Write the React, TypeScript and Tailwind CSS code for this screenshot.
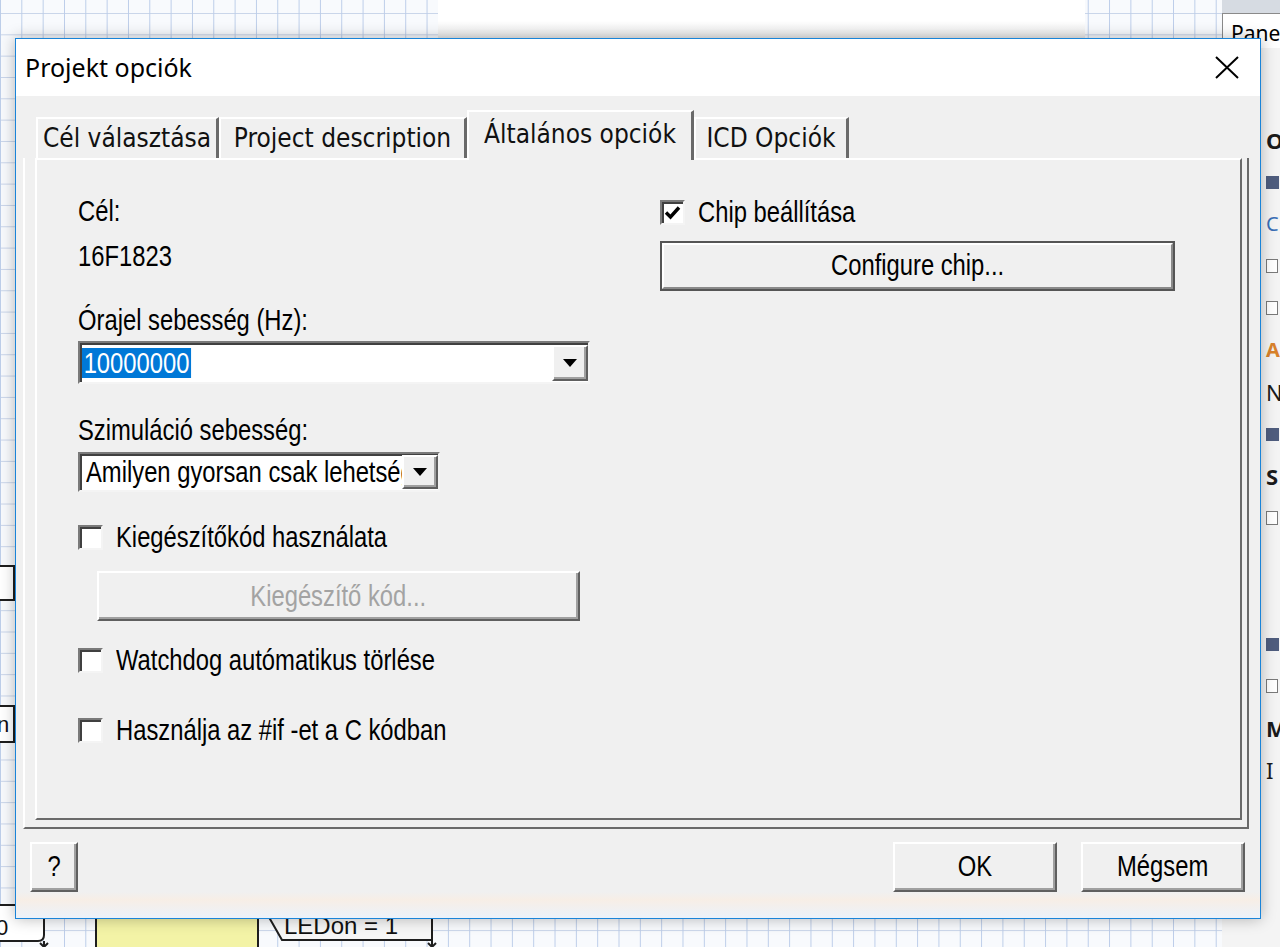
import React from "react";

const sans = "font-['Liberation_Sans',Arial,sans-serif]";
const tabFont = "font-['DejaVu_Sans_Condensed','DejaVu_Sans',sans-serif] font-stretch-condensed";

const raised =
  "border-2 border-t-white border-l-white border-r-[#5f5f5f] border-b-[#5f5f5f] bg-[#f0f0f0] shadow-[inset_-2px_-2px_0_#a0a0a0]";
const sunken =
  "border-2 border-t-[#7a7a7a] border-l-[#7a7a7a] border-r-[#f4f4f4] border-b-[#f4f4f4] shadow-[inset_2px_2px_0_#404040]";

// the dialog font is a tall, narrow sans; Liberation Sans squeezed to 82% gets close
const Narrow = ({ children, center = false }: { children: React.ReactNode; center?: boolean }) => (
  <span
    className={`inline-block whitespace-nowrap scale-x-[0.82] ${center ? "origin-center" : "origin-left"}`}
  >
    {children}
  </span>
);

const Arrow = () => (
  <svg width="14" height="8" viewBox="0 0 14 8">
    <path d="M0 0H14L7 8Z" fill="#000" />
  </svg>
);

const DropButton = ({ h }: { h: string }) => (
  <div className={`flex w-[36px] shrink-0 items-center justify-center ${h} ${raised}`}>
    <Arrow />
  </div>
);

const CheckBox = ({ checked = false, label }: { checked?: boolean; label: string }) => (
  <div className="flex h-[32px] items-center gap-[13px]">
    <span className={`flex h-[25px] w-[25px] shrink-0 items-center justify-center bg-white ${sunken}`}>
      {checked && (
        <svg width="17" height="15" viewBox="0 0 17 15">
          <path d="M2 7.5L6.5 12L15 2.5" fill="none" stroke="#000" strokeWidth="3.4" />
        </svg>
      )}
    </span>
    <span className="text-[29px] leading-[32px] text-black">
      <Narrow>{label}</Narrow>
    </span>
  </div>
);

const tabs = [
  { label: "Cél választása", w: "w-[183px]" },
  { label: "Project description", w: "w-[248px]" },
  { label: "Általános opciók", w: "w-[227px]", active: true },
  { label: "ICD Opciók", w: "w-[155px]" },
];

const sideRows = ["Op", "sq", "C", "box", "box", "A", "N", "sq", "S", "box", "", "", "sq", "box", "M", "I"];

const SideRow = ({ kind }: { kind: string }) => {
  if (kind === "sq") return <span className="h-[13px] w-[13px] bg-[#4f5d7e]" />;
  if (kind === "box") return <span className="h-[14px] w-[12px] border border-[#7a7a7a] bg-white" />;
  if (kind === "A") return <span className="text-[20px] font-bold text-[#d9822b]">A</span>;
  if (kind === "C") return <span className="text-[20px] text-[#3b6fb6]">C</span>;
  if (kind === "Op" || kind === "S" || kind === "M")
    return <span className="text-[22px] font-bold text-[#1b1b1b]">{kind}</span>;
  return <span className="text-[22px] text-[#1b1b1b]">{kind}</span>;
};

export default function App() {
  return (
    <div className="relative h-[947px] w-[1280px] overflow-hidden bg-[#f8fafd] bg-[image:linear-gradient(to_right,#bccde9_1px,transparent_1px),linear-gradient(to_bottom,#c9d5ea_1px,transparent_1px)] bg-[size:21.33px_21.33px] bg-[position:0_13px]">
      {/* window behind, top */}
      <div className="absolute left-[438px] top-0 h-[38px] w-[647px] bg-[linear-gradient(to_bottom,#ffffff,#ffffff_55%,#e9e9e9)]" />

      {/* side panel on the right */}
      <div className="absolute left-[1222px] top-0 flex h-[947px] w-[58px] flex-col bg-[#f4f4f4] font-['Noto_Sans',sans-serif]">
        <div className="h-[13px] bg-[#d6dbe2]" />
        <div className="h-[35px] border-l border-t border-[#8a8a8a] bg-white pl-[8px] text-[21px] leading-[38px] text-black">
          Panel
        </div>
        <div className="mt-[71px] flex flex-col pl-[44px]">
          {sideRows.map((r, i) => (
            <div key={i} className="flex h-[42px] items-center">
              <SideRow kind={r} />
            </div>
          ))}
        </div>
      </div>

      {/* flowchart pieces on the canvas */}
      <svg className="absolute left-0 top-0" width="1280" height="947" viewBox="0 0 1280 947">
        <rect x="-20" y="566" width="34" height="34" fill="#fff" stroke="#1e1e1e" strokeWidth="2" />
        <rect x="-30" y="706" width="44" height="36" fill="#fff" stroke="#1e1e1e" strokeWidth="2" />
        <text x="-3" y="732" fontFamily="Liberation Sans, sans-serif" fontSize="22" fill="#111">
          n :
        </text>
        <path d="M-10 905 H38 Q44 905 44 911 V935 Q44 941 38 941 H-10" fill="#fff" stroke="#1e1e1e" strokeWidth="2" />
        <text x="-4" y="935" fontFamily="Liberation Sans, sans-serif" fontSize="22" fill="#111">
          0
        </text>
        <path d="M44 941 V947 M40 943 L44 947 L48 943" fill="none" stroke="#1e1e1e" strokeWidth="2" />
        <rect x="96" y="905" width="162" height="60" fill="#f3f3a6" stroke="#1e1e1e" strokeWidth="2" />
        <path d="M262 905 L282 940 H432 V905" fill="#f6f6f6" stroke="#1e1e1e" strokeWidth="2" />
        <text x="284" y="934" fontFamily="Liberation Sans, sans-serif" fontSize="24" fill="#111">
          LEDon = 1
        </text>
        <path d="M432 940 V947 M428 943 L432 947 L436 943" fill="none" stroke="#1e1e1e" strokeWidth="2" />
      </svg>

      {/* dialog */}
      <div className="absolute left-[15px] top-[38px] flex h-[881px] w-[1246px] flex-col border border-[#1a84d8] bg-[#f0f0f0] shadow-[0_0_14px_rgba(0,0,0,0.28)]">
        <div className="flex h-[57px] shrink-0 items-center justify-between bg-white pl-[9px] pr-[21px]">
          <span className="font-['Noto_Sans','Open_Sans',sans-serif] text-[25px] text-black">Projekt opciók</span>
          <svg width="24" height="23" viewBox="0 0 24 23">
            <path d="M1 1L23 22M23 1L1 22" stroke="#000" strokeWidth="2" />
          </svg>
        </div>

        <div className={`flex shrink-0 flex-col pl-[7px] pr-[11px] pt-[14px] ${sans} text-black`}>
          <div className={`relative z-10 -mb-[2px] ml-[13px] flex h-[50px] items-end ${tabFont}`}>
            {tabs.map((t) =>
              t.active ? (
                <div
                  key={t.label}
                  className={`flex h-[50px] ${t.w} items-center justify-center border-l-2 border-r-[3px] border-t-2 border-l-white border-r-[#6a6a6a] border-t-white bg-[#f0f0f0] pb-[4px] text-[26px] text-[#111]`}
                >
                  {t.label}
                </div>
              ) : (
                <div
                  key={t.label}
                  className={`mb-[2px] flex h-[41px] ${t.w} items-center justify-center border-l-2 border-r-[3px] border-t-2 border-l-white border-r-[#6a6a6a] border-t-white bg-[#f0f0f0] text-[26px] text-[#111]`}
                >
                  {t.label}
                </div>
              )
            )}
          </div>

          <div className="border-b-2 border-l-2 border-r-2 border-b-[#6a6a6a] border-l-white border-r-[#6a6a6a] pb-[7px] pl-[10px] pr-[5px]">
            <div className="flex h-[662px] border-2 border-b-[#6a6a6a] border-l-white border-r-[#6a6a6a] border-t-white pl-[41px]">
              {/* left column */}
              <div className="flex w-[512px] flex-col pt-[35px] text-[29px] leading-[32px]">
                <p className="h-[32px]">
                  <Narrow>Cél:</Narrow>
                </p>
                <p className="mt-[13px] h-[32px]">
                  <Narrow>16F1823</Narrow>
                </p>
                <p className="mt-[32px] h-[32px]">
                  <Narrow>Órajel sebesség (Hz):</Narrow>
                </p>
                <div className={`mt-[5px] flex h-[43px] items-center bg-white pl-[2px] ${sunken}`}>
                  <div className="flex-1">
                    <span className="inline-block h-[30px] origin-left scale-x-[0.82] bg-[#0078d7] px-[2px] leading-[30px] text-white">
                      10000000
                    </span>
                  </div>
                  <DropButton h="h-[36px]" />
                </div>
                <p className="mt-[30px] h-[32px]">
                  <Narrow>Szimuláció sebesség:</Narrow>
                </p>
                <div className={`mt-[6px] flex h-[40px] w-[362px] items-center bg-white pl-[6px] ${sunken}`}>
                  <div className="flex-1 overflow-hidden whitespace-nowrap">
                    <Narrow>Amilyen gyorsan csak lehetséges</Narrow>
                  </div>
                  <DropButton h="h-[34px]" />
                </div>
                <div className="mt-[29px]">
                  <CheckBox label="Kiegészítőkód használata" />
                </div>
                <button
                  disabled
                  className={`ml-[19px] mt-[18px] h-[50px] w-[483px] text-[29px] text-[#a3a3a3] ${raised}`}
                >
                  <Narrow center>Kiegészítő kód...</Narrow>
                </button>
                <div className="mt-[23px]">
                  <CheckBox label="Watchdog autómatikus törlése" />
                </div>
                <div className="mt-[38px]">
                  <CheckBox label="Használja az #if -et a C kódban" />
                </div>
              </div>

              {/* right column */}
              <div className="ml-[70px] flex w-[515px] flex-col pt-[36px]">
                <CheckBox checked label="Chip beállítása" />
                <div className="mt-[13px] h-[50px] border-2 border-[#555555]">
                  <div className="flex h-full items-center justify-center border-2 border-b-[#8a8a8a] border-l-white border-r-[#8a8a8a] border-t-white text-[29px] text-black">
                    <Narrow center>Configure chip...</Narrow>
                  </div>
                </div>
              </div>
            </div>
          </div>

          <div className="mt-[13px] flex h-[50px] pl-[7px] pr-[4px] text-[29px]">
            <button className={`w-[48px] ${raised}`}>
              <Narrow center>?</Narrow>
            </button>
            <div className="flex-1" />
            <button className={`w-[164px] ${raised}`}>
              <Narrow center>OK</Narrow>
            </button>
            <button className={`ml-[24px] w-[164px] ${raised}`}>
              <Narrow center>Mégsem</Narrow>
            </button>
          </div>
        </div>

        <div className="flex-1 bg-[linear-gradient(to_bottom,#f0f0f0,#f7eee6_30%,#ebf2fa)]" />
      </div>
    </div>
  );
}
